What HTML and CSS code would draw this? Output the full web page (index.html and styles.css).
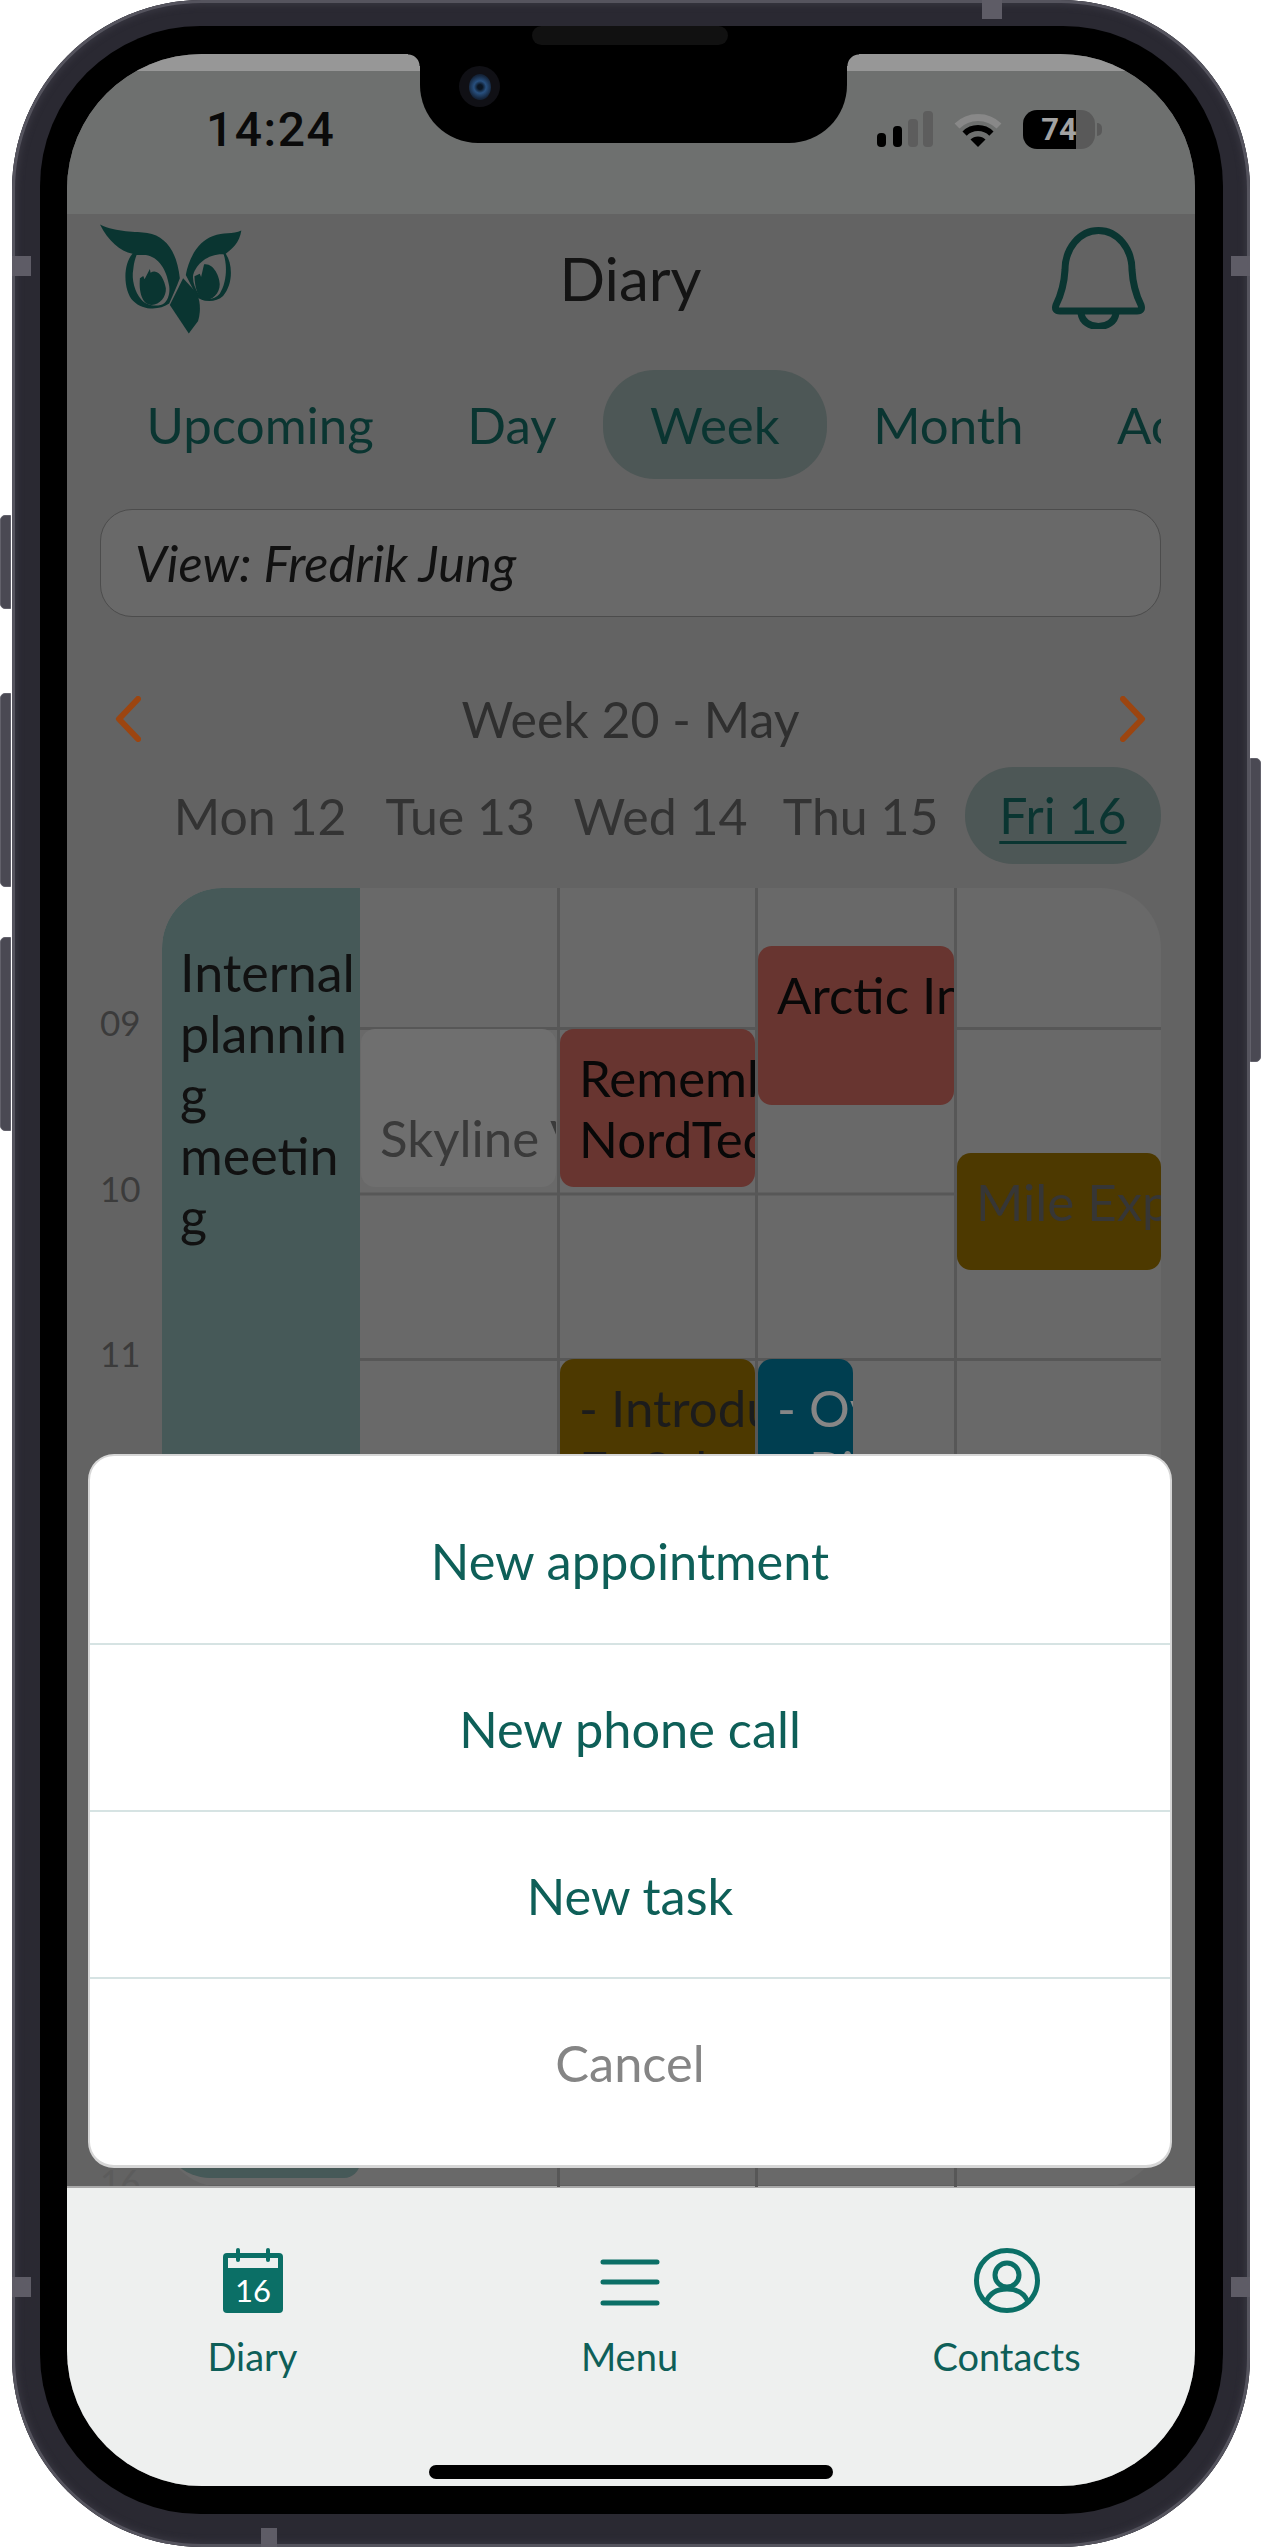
FILE: index.html
```html
<!DOCTYPE html>
<html lang="en">
<head>
    <meta charset="UTF-8">
    <meta name="viewport" content="width=device-width, initial-scale=1.0">
    <title>Diary - Week</title>
    <link rel="stylesheet" href="styles.css">
</head>
<body>
    <div class="phone">
        <!-- Hardware buttons and antenna marks -->
        <span class="side-btn btn-mute"></span>
        <span class="side-btn btn-up"></span>
        <span class="side-btn btn-down"></span>
        <span class="side-btn btn-power"></span>
        <span class="band band-lt"></span>
        <span class="band band-lb"></span>
        <span class="band band-rt"></span>
        <span class="band band-rb"></span>
        <span class="band band-top"></span>
        <span class="band band-bottom"></span>

        <div class="bezel">
            <div class="notch">
                <span class="speaker"></span>
                <span class="camera"><span class="lens"></span></span>
            </div>

            <div class="screen">
                <!-- Status bar -->
                <div class="status-bar">
                    <span class="clock">14:24</span>
                    <div class="status-icons">
                        <svg class="signal" viewBox="0 0 56 36" width="56" height="36">
                            <rect x="0" y="22" width="9" height="14" rx="4" fill="#000"/>
                            <rect x="16" y="15" width="9" height="21" rx="4" fill="#000"/>
                            <rect x="31" y="8" width="10" height="28" rx="4" fill="#5d5d5d"/>
                            <rect x="46" y="0" width="10" height="36" rx="4" fill="#5d5d5d"/>
                        </svg>
                        <svg class="wifi" viewBox="0 0 48 36" width="48" height="36">
                            <path d="M3 15A30 30 0 0 1 45 15" fill="none" stroke="#888" stroke-width="7"/>
                            <path d="M10.6 22.6A19 19 0 0 1 37.4 22.6" fill="none" stroke="#000" stroke-width="6"/>
                            <path d="M24 36L16.5 28.5A10.6 10.6 0 0 1 31.5 28.5Z" fill="#000"/>
                        </svg>
                        <div class="battery">74</div>
                    </div>
                </div>

                <div class="app">
                    <!-- Header -->
                    <header class="app-header">
                        <svg class="logo" viewBox="120 60 430 345" width="143" height="115">
                            <path class="owl" d="M120 70C170 95 230 90 262 96C320 105 352 155 360 232C350 260 338 285 328 308C300 328 250 330 220 300C190 270 188 190 218 158C180 150 145 120 120 70Z"/>
                            <path class="owl-gap" d="M230 162L258 162C296 168 320 205 328 255C331 275 326 295 314 306C300 318 262 318 244 296C225 275 214 235 220 205C222 185 226 172 230 162Z"/>
                            <path class="owl" d="M240 232L250 225L254 235L270 204L272 215C295 200 314 235 318 262C320 287 300 312 275 312C250 312 236 280 240 232Z"/>
                            <path class="owl" d="M545 88C520 100 490 92 460 105C420 118 388 165 378 222L412 288C430 305 470 305 490 285C520 250 520 190 498 158C515 145 540 125 545 88Z"/>
                            <path class="owl-gap" d="M492 160C502 190 503 240 480 278C465 298 430 300 418 282C404 260 398 240 400 222C410 188 445 158 492 160Z"/>
                            <path class="owl" d="M404 226L420 218L424 228L433 190C460 185 480 225 480 250C480 280 455 300 432 298C415 292 405 260 404 226Z"/>
                            <path class="owl" d="M370 232L410 275C420 295 425 325 415 360L387 398L330 312Z"/>
                        </svg>
                        <h1 class="page-title">Diary</h1>
                        <svg class="bell" viewBox="0 0 95 102" width="95" height="102">
                            <path d="M47.5 3.5C28 3.5 14 22 14 43C13 60 9 70 5 78Q3 84 9 84L86 84Q92 84 90 78C86 70 82 60 81 43C81 22 67 3.5 47.5 3.5Z"/>
                            <path d="M30 86C32 104 63 104 65 86"/>
                        </svg>
                    </header>

                    <!-- View tabs -->
                    <nav class="tabs">
                        <span class="tab">Upcoming</span>
                        <span class="tab">Day</span>
                        <span class="tab tab-active">Week</span>
                        <span class="tab">Month</span>
                        <span class="tab">Activities</span>
                    </nav>

                    <div class="view-select">View: Fredrik Jung</div>

                    <!-- Week navigation -->
                    <div class="week-nav">
                        <svg class="chevron" viewBox="0 0 26 46" width="26" height="46"><path d="M23 3L4 23L23 43"/></svg>
                        <span class="week-label">Week 20 - May</span>
                        <svg class="chevron" viewBox="0 0 26 46" width="26" height="46"><path d="M3 3L22 23L3 43"/></svg>
                    </div>

                    <div class="day-heads">
                        <span class="day-head">Mon 12</span>
                        <span class="day-head">Tue 13</span>
                        <span class="day-head">Wed 14</span>
                        <span class="day-head">Thu 15</span>
                        <span class="day-head day-today"><u>Fri 16</u></span>
                    </div>

                    <!-- Calendar grid -->
                    <div class="calendar">
                        <div class="hours">
                            <span class="hour">09</span>
                            <span class="hour">10</span>
                            <span class="hour">11</span>
                            <span class="hour">12</span>
                            <span class="hour">13</span>
                            <span class="hour">14</span>
                            <span class="hour">15</span>
                            <span class="hour hour-faint">16</span>
                        </div>
                        <div class="days">
                            <div class="day">
                                <div class="event ev-internal">Internal planning meeting</div>
                            </div>
                            <div class="day">
                                <div class="event ev-skyline">Skyline Ventures</div>
                            </div>
                            <div class="day">
                                <div class="event ev-remember">Remember<br>NordTech</div>
                                <div class="event ev-intro">- Introduction<br>Fa Sales</div>
                            </div>
                            <div class="day">
                                <div class="event ev-arctic">Arctic Innovations</div>
                                <div class="event ev-overview">- Overview<br>- Bi</div>
                            </div>
                            <div class="day">
                                <div class="event ev-mile">Mile Expo</div>
                            </div>
                        </div>
                    </div>
                </div>

                <!-- Bottom tab bar -->
                <footer class="tab-bar">
                    <div class="tab-items">
                        <div class="tab-item">
                            <svg class="tab-icon" viewBox="0 0 60 65" width="60" height="65">
                                <rect x="0" y="5" width="60" height="60" rx="4" fill="#0b6f66"/>
                                <rect x="5" y="10" width="50" height="10" fill="#eef0ef"/>
                                <rect x="13" y="0" width="4" height="14" rx="2" fill="#0b6f66"/>
                                <rect x="43" y="0" width="4" height="14" rx="2" fill="#0b6f66"/>
                                <text class="cal-date" x="30" y="54" text-anchor="middle">16</text>
                            </svg>
                            <span class="tab-label">Diary</span>
                        </div>
                        <div class="tab-item">
                            <svg class="tab-icon" viewBox="0 0 60 65" width="60" height="65">
                                <path class="stroke-icon" d="M3 14H57M3 34H57M3 55H57"/>
                            </svg>
                            <span class="tab-label">Menu</span>
                        </div>
                        <div class="tab-item">
                            <svg class="tab-icon" viewBox="0 0 66 65" width="66" height="65">
                                <ellipse class="stroke-icon" cx="33" cy="32.5" rx="30.5" ry="30"/>
                                <circle class="stroke-icon" cx="33" cy="27" r="12"/>
                                <path class="stroke-icon" d="M12 54C16 44 24 41 33 41C42 41 50 44 54 54"/>
                            </svg>
                            <span class="tab-label">Contacts</span>
                        </div>
                    </div>
                    <div class="home-bar"></div>
                </footer>

                <!-- Action sheet -->
                <div class="sheet">
                    <div class="sheet-row sheet-first">New appointment</div>
                    <div class="sheet-row">New phone call</div>
                    <div class="sheet-row">New task</div>
                    <div class="sheet-row sheet-cancel">Cancel</div>
                </div>
            </div>
        </div>
    </div>
</body>
</html>
```

FILE: styles.css
```css
/* Theme Colors */
:root {
    --frame: #2a2932;
    --frame-edge: #55545e;
    --dark-teal: #0a3531;
    --teal: #0e5f58;
    --icon-teal: #0b6f66;
    --pill: #4d5756;
    --app-bg: #636363;
    --grid-bg: #696969;
    --grid-line: #575757;
    --text-dim: #333;
}

* {
    box-sizing: border-box;
}

body {
    margin: 0;
    background-color: #fff;
    font-family: "Lato", "Noto Sans", sans-serif;
}

/* Phone shell */
.phone {
    position: relative;
    width: 1238px;
    height: 2547px;
    margin-left: 12px;
    padding: 26px 27px 33px 28px;
    background-color: var(--frame);
    border-radius: 190px;
    box-shadow: inset 0 0 0 3px var(--frame-edge), inset 0 0 6px 5px #383741;
}

.bezel {
    position: relative;
    height: 100%;
    padding: 28px 28px 28px 27px;
    background-color: #000;
    border-radius: 160px;
}

.side-btn {
    position: absolute;
    left: -12px;
    width: 11px;
    background-color: #4a4953;
    border: 1px solid #62616b;
    border-radius: 5px 0 0 5px;
}

.btn-mute { top: 515px; height: 94px; }
.btn-up { top: 693px; height: 194px; }
.btn-down { top: 937px; height: 194px; }

.btn-power {
    top: 758px;
    left: auto;
    right: -11px;
    width: 11px;
    height: 304px;
    border-radius: 0 5px 5px 0;
}

.band {
    position: absolute;
    background-color: #5e5c66;
}

.band-lt, .band-lb, .band-rt, .band-rb {
    width: 19px;
    height: 20px;
}

.band-lt { left: 0; top: 256px; }
.band-lb { left: 0; top: 2277px; }
.band-rt { right: 0; top: 256px; }
.band-rb { right: 0; top: 2277px; }

.band-top {
    left: 970px;
    top: 0;
    width: 20px;
    height: 19px;
}

.band-bottom {
    left: 249px;
    bottom: 0;
    width: 16px;
    height: 19px;
}

/* Notch */
.notch {
    position: absolute;
    z-index: 5;
    left: 380px;
    top: 0;
    width: 427px;
    height: 117px;
    background-color: #000;
    border-radius: 0 0 58px 58px;
}

.notch::before, .notch::after {
    content: "";
    position: absolute;
    top: 28px;
    width: 12px;
    height: 12px;
}

.notch::before {
    left: -12px;
    background: radial-gradient(circle at 0 100%, transparent 11px, #000 12px);
}

.notch::after {
    right: -12px;
    background: radial-gradient(circle at 100% 100%, transparent 11px, #000 12px);
}

.speaker {
    position: absolute;
    left: 112px;
    top: 0;
    width: 196px;
    height: 19px;
    background-color: #111;
    border-radius: 10px;
}

.camera {
    position: absolute;
    left: 39px;
    top: 40px;
    display: flex;
    align-items: center;
    justify-content: center;
    width: 41px;
    height: 41px;
    background-color: #101015;
    border-radius: 50%;
}

.lens {
    width: 22px;
    height: 26px;
    background: radial-gradient(circle, #0a1522 14%, #28507f 36%, #15263d 68%, #0c0f16 100%);
    border-radius: 50%;
}

/* Screen */
.screen {
    position: relative;
    display: flex;
    flex-direction: column;
    height: 100%;
    overflow: hidden;
    background-color: var(--app-bg);
    border-radius: 135px;
}

/* Status bar */
.status-bar {
    display: flex;
    align-items: center;
    flex-shrink: 0;
    height: 160px;
    padding: 0 93px 10px 139px;
    background: linear-gradient(#979797 17px, #6e706f 17px);
}

.clock {
    color: #0a0a0a;
    font-family: "Roboto", sans-serif;
    font-size: 48px;
    font-weight: 500;
    letter-spacing: 1.5px;
}

.status-icons {
    display: flex;
    align-items: center;
    gap: 21px;
    margin-left: auto;
}

.battery {
    position: relative;
    width: 72px;
    height: 39px;
    margin-right: 7px;
    color: #a2a2a2;
    font-family: "Roboto", sans-serif;
    font-size: 31px;
    font-weight: 700;
    line-height: 39px;
    text-align: center;
    background: linear-gradient(90deg, #000 74%, #595959 74%);
    border-radius: 14px;
}

.battery::after {
    content: "";
    position: absolute;
    left: 74px;
    top: 13px;
    width: 5px;
    height: 13px;
    background-color: #595959;
    border-radius: 0 6px 6px 0;
}

/* App */
.app {
    flex: 1;
    min-height: 0;
    padding-left: 33px;
    padding-right: 34px;
    background-color: var(--app-bg);
}

.app-header {
    display: grid;
    grid-template-columns: 1fr auto 1fr;
    align-items: center;
    height: 156px;
    padding-bottom: 28px;
}

.page-title {
    margin: 0;
    color: #141414;
    font-size: 60px;
    font-weight: 400;
}

.owl { fill: var(--dark-teal); }
.owl-gap { fill: var(--app-bg); }

.bell {
    justify-self: end;
    margin-right: 15px;
    fill: none;
    stroke: var(--dark-teal);
    stroke-width: 7;
    stroke-linejoin: round;
}

/* Tabs */
.tabs {
    display: flex;
    height: 109px;
    overflow: hidden;
}

.tab {
    flex-shrink: 0;
    padding: 0 47px 0 46.5px;
    color: var(--dark-teal);
    font-size: 51px;
    line-height: 110px;
    border-radius: 52px;
}

.tab-active {
    background-color: var(--pill);
}

.view-select {
    height: 108px;
    margin-top: 30px;
    padding-left: 34px;
    color: #111;
    font-size: 50.5px;
    font-style: italic;
    line-height: 106px;
    background-color: #696969;
    border: 1.5px solid #4c4c4c;
    border-radius: 32px;
}

/* Week navigation */
.week-nav {
    display: flex;
    align-items: center;
    justify-content: space-between;
    height: 84px;
    margin-top: 60px;
    padding: 0 15px;
}

.week-label {
    color: #2f2f2f;
    font-size: 50px;
}

.chevron {
    fill: none;
    stroke: #9c4510;
    stroke-width: 6;
    stroke-linecap: round;
    stroke-linejoin: round;
}

.day-heads {
    display: grid;
    grid-template-columns: repeat(5, 1fr);
    align-items: center;
    height: 97px;
    margin-top: 6px;
    margin-bottom: 1px;
    margin-left: 60px;
}

.day-head {
    color: var(--text-dim);
    font-size: 50px;
    text-align: center;
}

.day-today {
    margin-left: 4px;
    color: var(--dark-teal);
    line-height: 97px;
    background-color: var(--pill);
    border-radius: 48px;
}

.day-today u {
    text-underline-offset: 7px;
    text-decoration-thickness: 3px;
}

/* Calendar */
.calendar {
    display: flex;
    height: 1299px;
    margin-top: 24px;
}

.hours {
    display: flex;
    flex-direction: column;
    flex-shrink: 0;
    width: 62px;
    padding-top: 52px;
}

.hour {
    flex-shrink: 0;
    height: 165.5px;
    color: #3b3b3b;
    font-size: 35px;
    line-height: 165.5px;
}

.hour-faint {
    color: #5c5c5c;
}

.days {
    display: grid;
    flex: 1;
    grid-template-columns: 198px 200px 198px 199px 1fr;
    overflow: hidden;
    background-color: var(--grid-bg);
    background-image: linear-gradient(var(--grid-line) 3px, transparent 3px);
    background-size: 100% 165.5px;
    background-position: 0 139px;
    border-radius: 60px;
}

.day {
    position: relative;
    border-right: 3px solid var(--grid-line);
}

.day:first-child,
.day:last-child {
    border-right: none;
}

/* Events */
.event {
    position: absolute;
    left: 0;
    padding: 18px 0 0 19px;
    overflow: hidden;
    color: #080808;
    font-size: 51px;
    line-height: 61px;
    white-space: nowrap;
    border-radius: 14px;
}

.ev-internal {
    top: 0;
    width: 198px;
    height: 1290px;
    padding: 54px 0 0 18px;
    color: #111;
    font-size: 52px;
    white-space: normal;
    overflow-wrap: anywhere;
    background-color: #465958;
    border-radius: 60px 0 16px 48px;
}

.ev-skyline {
    left: 1px;
    top: 141px;
    width: 195px;
    height: 158px;
    padding-top: 78px;
    color: #3a3a3a;
    background-color: #6f6f6f;
}

.ev-remember {
    top: 141px;
    width: 195px;
    height: 158px;
    background-color: #683530;
}

.ev-intro {
    top: 471px;
    width: 195px;
    height: 320px;
    color: #1c1c1c;
    background-color: #4d3900;
}

.ev-arctic {
    top: 58px;
    width: 196px;
    height: 159px;
    background-color: #683530;
}

.ev-overview {
    top: 471px;
    width: 95px;
    height: 320px;
    color: #868686;
    background-color: #003e50;
}

.ev-mile {
    top: 265px;
    width: 204px;
    height: 117px;
    color: #363636;
    background-color: #4d3900;
}

/* Tab bar */
.tab-bar {
    display: flex;
    flex-direction: column;
    flex-shrink: 0;
    height: 300px;
    padding-top: 60px;
    background-color: #eef0ef;
    border-top: 2px solid #a9a9a9;
}

.tab-items {
    display: grid;
    grid-template-columns: repeat(3, 377px);
    margin-left: -3px;
}

.tab-item {
    display: flex;
    flex-direction: column;
    align-items: center;
}

.tab-label {
    margin-top: 20px;
    color: var(--teal);
    font-size: 38px;
    line-height: 46px;
}

.cal-date {
    fill: #fff;
    font-family: "Lato", sans-serif;
    font-size: 31px;
}

.stroke-icon {
    fill: none;
    stroke: var(--icon-teal);
    stroke-width: 5;
    stroke-linecap: round;
}

.home-bar {
    width: 404px;
    height: 14px;
    margin: 86px auto 0;
    background-color: #000;
    border-radius: 7px;
}

/* Action sheet */
.sheet {
    position: absolute;
    left: 21px;
    top: 1400px;
    display: flex;
    flex-direction: column;
    width: 1084px;
    height: 714px;
    overflow: hidden;
    background-color: #fff;
    border: 2px solid #d6d6d6;
    border-bottom-width: 3px;
    border-radius: 26px;
}

.sheet-row {
    display: flex;
    align-items: center;
    justify-content: center;
    flex: none;
    height: 167px;
    padding-top: 1px;
    color: var(--teal);
    font-size: 50.5px;
    border-bottom: 2px solid #d6e3e3;
}

.sheet-first {
    height: 189px;
    padding-top: 22px;
}

.sheet-cancel {
    flex: 1;
    padding-top: 0;
    padding-bottom: 20px;
    color: #858585;
    border-bottom: none;
}
```
